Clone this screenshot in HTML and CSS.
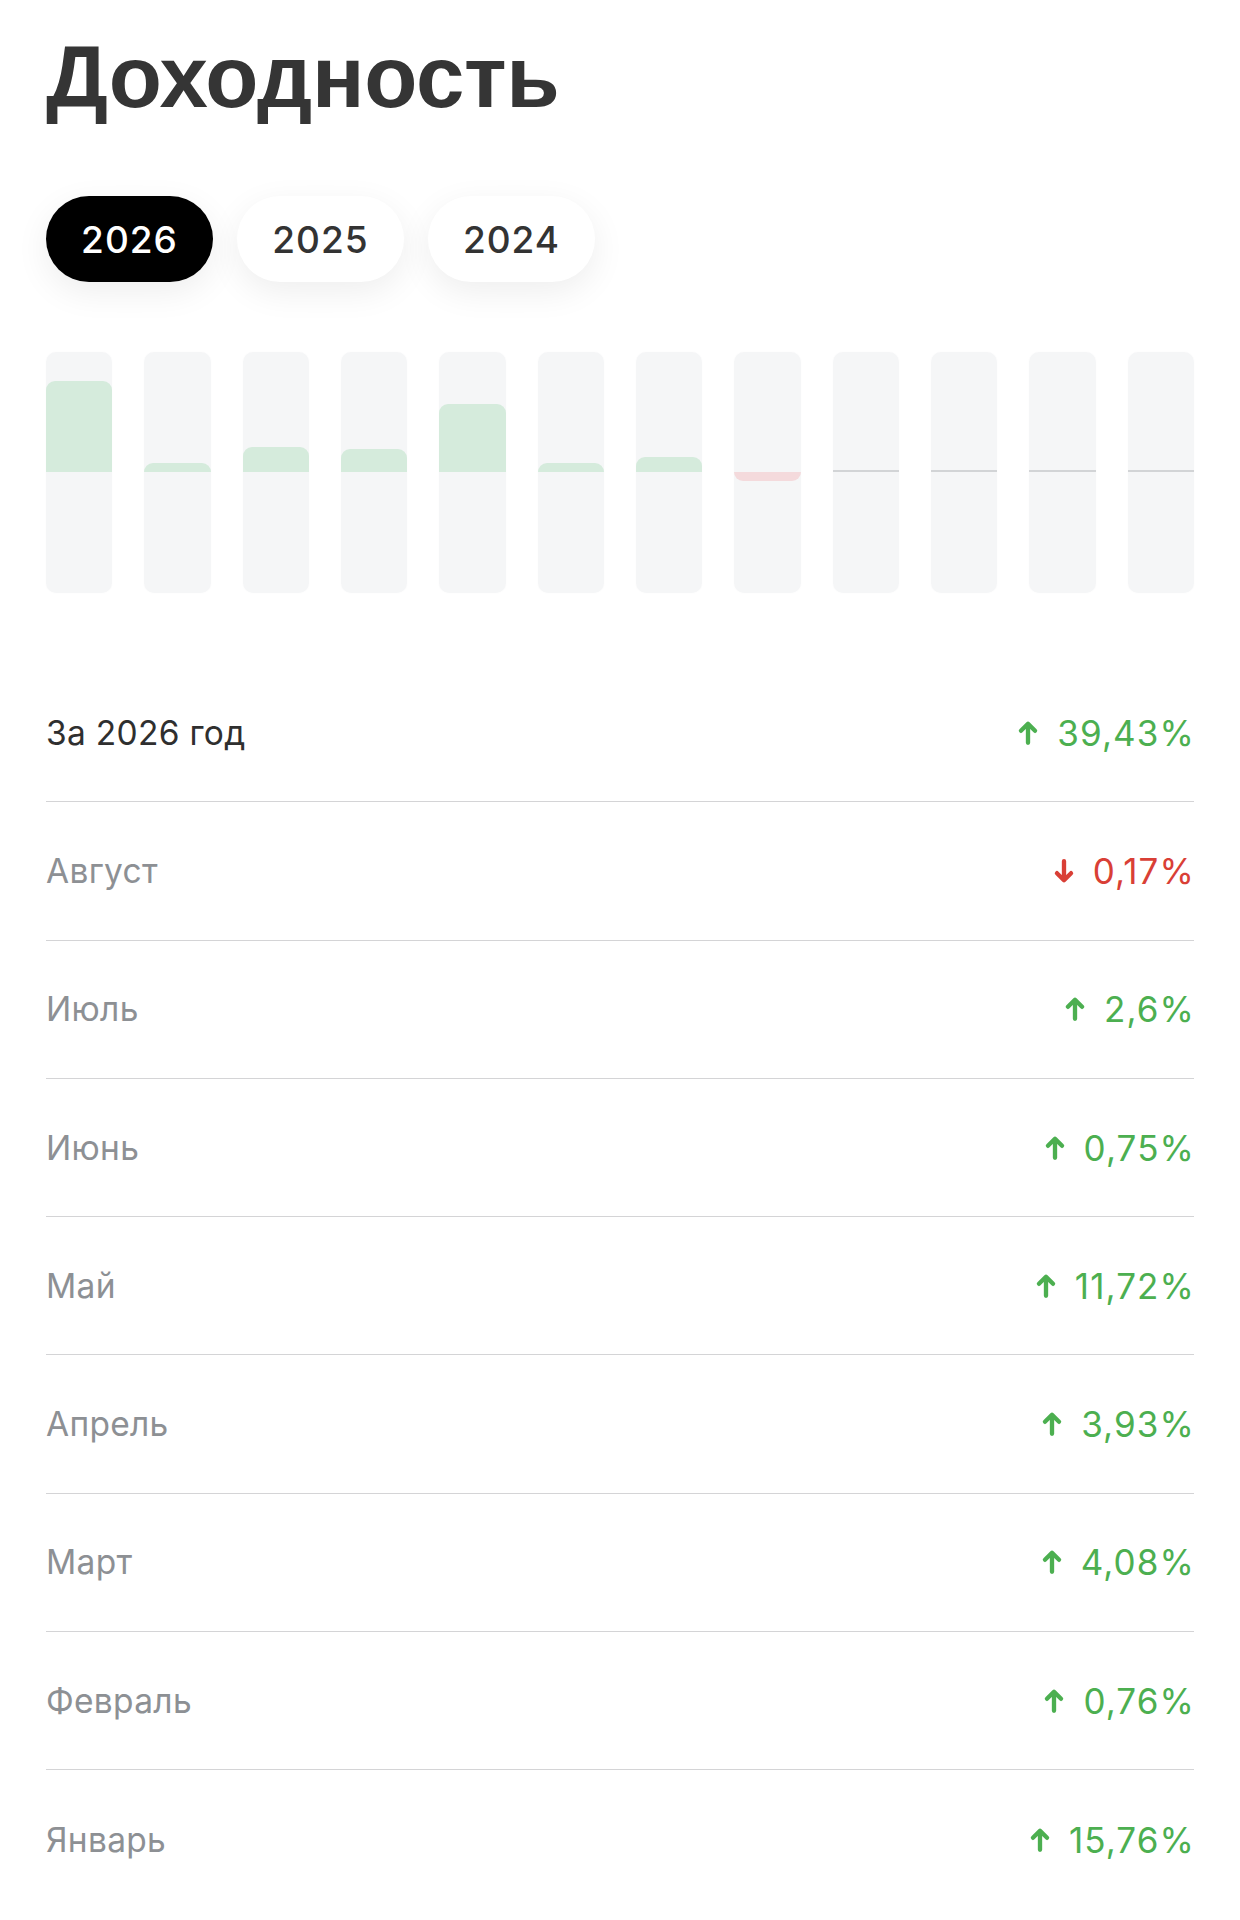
FILE: index.html
```html
<!DOCTYPE html>
<html lang="ru">
<head>
<meta charset="utf-8">
<title>Доходность</title>
<link rel="stylesheet" href="styles.css">
</head>
<body>
<main class="page">
  <h1 class="title">Доходность</h1>

  <div class="years">
    <button class="pill pill-active">2026</button>
    <button class="pill">2025</button>
    <button class="pill">2024</button>
  </div>

  <div class="chart">
    <div class="bar"><div class="half half-up"><div class="fill-up" style="height:91px"></div></div><div class="half half-down"></div></div>
    <div class="bar"><div class="half half-up"><div class="fill-up" style="height:9px"></div></div><div class="half half-down"></div></div>
    <div class="bar"><div class="half half-up"><div class="fill-up" style="height:25px"></div></div><div class="half half-down"></div></div>
    <div class="bar"><div class="half half-up"><div class="fill-up" style="height:23px"></div></div><div class="half half-down"></div></div>
    <div class="bar"><div class="half half-up"><div class="fill-up" style="height:68px"></div></div><div class="half half-down"></div></div>
    <div class="bar"><div class="half half-up"><div class="fill-up" style="height:9px"></div></div><div class="half half-down"></div></div>
    <div class="bar"><div class="half half-up"><div class="fill-up" style="height:15px"></div></div><div class="half half-down"></div></div>
    <div class="bar"><div class="half half-up"></div><div class="half half-down"><div class="fill-down" style="height:9px"></div></div></div>
    <div class="bar bar-empty"><div class="half half-up"></div><div class="half half-down"></div></div>
    <div class="bar bar-empty"><div class="half half-up"></div><div class="half half-down"></div></div>
    <div class="bar bar-empty"><div class="half half-up"></div><div class="half half-down"></div></div>
    <div class="bar bar-empty"><div class="half half-up"></div><div class="half half-down"></div></div>
  </div>

  <ul class="list">
    <li class="row row-total"><span class="label">За 2026 год</span><span class="value up"><svg class="arrow" viewBox="0 0 20 24"><path d="M10 21V4M3.5 10L10 3.5L16.5 10"/></svg>39,43%</span></li>
    <li class="row"><span class="label">Август</span><span class="value down"><svg class="arrow" viewBox="0 0 20 24"><path d="M10 3V20M3.5 14L10 20.5L16.5 14"/></svg>0,17%</span></li>
    <li class="row"><span class="label">Июль</span><span class="value up"><svg class="arrow" viewBox="0 0 20 24"><path d="M10 21V4M3.5 10L10 3.5L16.5 10"/></svg>2,6%</span></li>
    <li class="row"><span class="label">Июнь</span><span class="value up"><svg class="arrow" viewBox="0 0 20 24"><path d="M10 21V4M3.5 10L10 3.5L16.5 10"/></svg>0,75%</span></li>
    <li class="row"><span class="label">Май</span><span class="value up"><svg class="arrow" viewBox="0 0 20 24"><path d="M10 21V4M3.5 10L10 3.5L16.5 10"/></svg>11,72%</span></li>
    <li class="row"><span class="label">Апрель</span><span class="value up"><svg class="arrow" viewBox="0 0 20 24"><path d="M10 21V4M3.5 10L10 3.5L16.5 10"/></svg>3,93%</span></li>
    <li class="row"><span class="label">Март</span><span class="value up"><svg class="arrow" viewBox="0 0 20 24"><path d="M10 21V4M3.5 10L10 3.5L16.5 10"/></svg>4,08%</span></li>
    <li class="row"><span class="label">Февраль</span><span class="value up"><svg class="arrow" viewBox="0 0 20 24"><path d="M10 21V4M3.5 10L10 3.5L16.5 10"/></svg>0,76%</span></li>
    <li class="row row-last"><span class="label">Январь</span><span class="value up"><svg class="arrow" viewBox="0 0 20 24"><path d="M10 21V4M3.5 10L10 3.5L16.5 10"/></svg>15,76%</span></li>
  </ul>
</main>
</body>
</html>
```

FILE: styles.css
```css
* { box-sizing: border-box; }

html, body {
  margin: 0;
  padding: 0;
  background: #ffffff;
}

body {
  font-family: "Inter", "Liberation Sans", sans-serif;
  color: #333333;
}

.page {
  padding: 27px 46px 0;
}

.title {
  margin: 0;
  font-family: "Liberation Sans", Arial, sans-serif;
  font-weight: 700;
  font-size: 87px;
  line-height: 100px;
  color: #353535;
  letter-spacing: -0.3px;
}

.years {
  display: flex;
  gap: 24px;
  margin-top: 69px;
}

.pill {
  height: 86px;
  width: 167px;
  border: none;
  border-radius: 43px;
  background: #ffffff;
  color: #333333;
  font-family: "Inter", "Liberation Sans", sans-serif;
  font-size: 37px;
  font-weight: 500;
  letter-spacing: 1px;
  box-shadow: 0 10px 34px rgba(0, 0, 0, 0.07);
  padding: 0;
}

.pill-active {
  background: #000000;
  color: #ffffff;
}

.chart {
  display: grid;
  grid-template-columns: repeat(12, 1fr);
  gap: 32px;
  margin-top: 70px;
  height: 241px;
}

.bar {
  display: flex;
  flex-direction: column;
  background: #f5f6f7;
  border-radius: 10px;
  overflow: hidden;
  box-shadow: 0 0 3px rgba(0, 0, 0, 0.02);
}

.half {
  display: flex;
  flex-direction: column;
}

.half-up {
  height: 120px;
  justify-content: flex-end;
}

.half-down {
  flex: 1;
  justify-content: flex-start;
}

.fill-up {
  background: #d5ebdc;
  border-radius: 9px 9px 0 0;
}

.fill-down {
  background: #f4dadc;
  border-radius: 0 0 9px 9px;
}

.bar-empty .half-up {
  border-bottom: 2px solid #d2d4d6;
}

.bar-empty .half-down {
  margin-top: -1px;
}

.list {
  list-style: none;
  margin: 71px 0 0;
  padding: 0;
}

.row {
  display: flex;
  justify-content: space-between;
  align-items: center;
  height: 138.3px;
  border-bottom: 1.5px solid #d4d4d6;
  font-size: 33.5px;
}

.row-last {
  border-bottom: none;
}

.label {
  color: #8d9094;
  letter-spacing: 0.3px;
}

.row-total .label {
  color: #2f2f2f;
}

.value {
  display: flex;
  align-items: center;
  gap: 18px;
  font-size: 35px;
  letter-spacing: 1.1px;
  margin-right: -1px;
}

.arrow {
  width: 22px;
  height: 26px;
  fill: none;
  stroke-width: 4;
  stroke-linecap: round;
  stroke-linejoin: round;
}

.up {
  color: #4caf50;
}

.up .arrow {
  stroke: #4caf50;
}

.down {
  color: #d93f36;
}

.down .arrow {
  stroke: #d93f36;
}
```
